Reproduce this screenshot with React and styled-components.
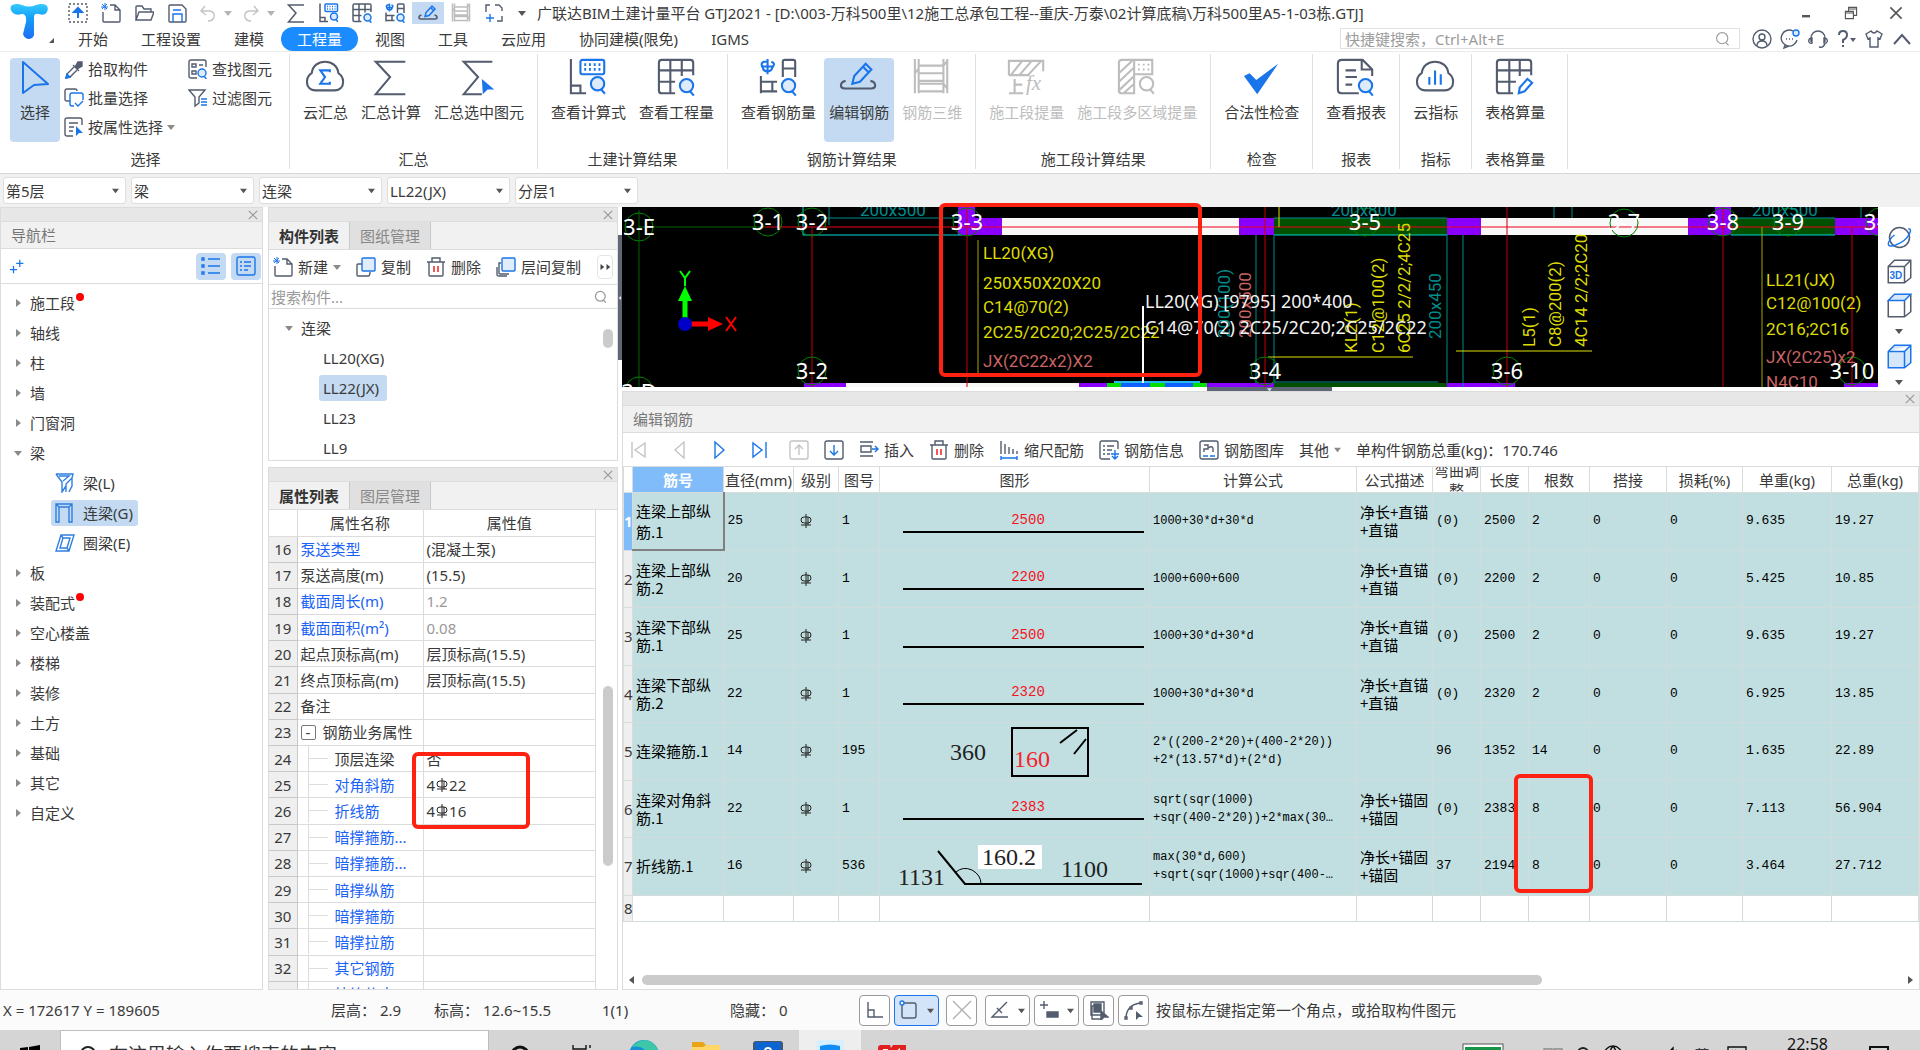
import React from 'react'
import styled, { createGlobalStyle, css } from 'styled-components'

const ink = '#3a3a3a'
const steel = '#535c6e'
const blue = '#1a75ea'
const picked = '#c3daf2'
const line = '#dcdcdc'

const GlobalStyle = createGlobalStyle`
  * { box-sizing: border-box; }
  body {
    margin: 0;
    color: ${ink};
    background: #f0f0f0;
    font: 15px/20px 'Noto Sans', 'Noto Sans CJK SC', sans-serif;
  }
  button, input, select {
    font: inherit;
    color: inherit;
    border: 0;
    padding: 0;
    margin: 0;
    background: none;
  }
  a { color: inherit; text-decoration: none; }
  svg { display: block; flex: none; }
`

/* ---------- icons ---------- */

const Icon = ({ size = 20, box = 20, color = steel, width = 1.4, children }) => (
  <svg width={size} height={size} viewBox={`0 0 ${box} ${box}`} fill="none" stroke={color} strokeWidth={width} aria-hidden="true">
    {children}
  </svg>
)

const Caret = ({ dir = 'down', color = '#8a8a8a', size = 8 }) => (
  <svg width={size} height={size} viewBox="0 0 8 8" fill={color} aria-hidden="true">
    {dir === 'down' && <path d="M0 2H8L4 7Z" />}
    {dir === 'right' && <path d="M2 0L7 4L2 8Z" />}
    {dir === 'left' && <path d="M6 0L1 4L6 8Z" />}
  </svg>
)

const lens = (x, y, r, stroke = blue, fill = '#ddebfb') => (
  <g stroke={stroke}>
    <circle cx={x} cy={y} r={r} fill={fill} />
    <path d={`M${x + r * 0.5} ${y + r * 0.8}L${x + r * 1.1} ${y + r * 1.5}`} />
  </g>
)

const cloud = 'M10 34C4 34 1 30 1 25C1 21 3 18 6 16C7 8 13 4 20 4C27 4 33 8 34 16C37 18 39 21 39 25C39 30 36 34 30 34Z'

const art = {
  cursor: <path d="M8 4L33 26L19 27L8 35Z" stroke={blue} strokeLinejoin="round" />,
  cloudSum: (
    <>
      <path d={cloud} />
      <path d="M25 15V13H15L20 20L15 27H25V25" stroke={blue} />
    </>
  ),
  sigma: <path d="M36 4H5L20 20L5 38H36" />,
  sigmaPick: (
    <>
      <path d="M35 4H5L20 20L5 38H24" />
      <path d="M24 22L37 33L30 33L25 38Z" fill={blue} stroke="none" />
    </>
  ),
  formula: (
    <>
      <path d="M2 1V37H18M2 29H12V37" />
      <g stroke={blue}>
        <rect x="12" y="2" width="25" height="15" rx="2" />
        <path d="M16 7H34M16 12H34" strokeDasharray="2 3" strokeWidth="3" />
      </g>
      {lens(30, 27, 7)}
    </>
  ),
  quantity: (
    <>
      <path d="M19 37H5Q2 37 2 34V5Q2 2 5 2H35Q38 2 38 5V18M2 13H38M2 25H19M14 2V37M26 2V19" />
      {lens(31, 29, 7)}
    </>
  ),
  rebarQty: (
    <>
      <path d="M25 20V4Q25 2 27 2H36Q38 2 38 4V20M25 11H38M2 19V37M2 25H19M2 35H19M14 25V35" />
      <path d="M9 1V17M4 9Q1 6 5 4H9M13 4Q18 6 14 9M4 9Q4 14 9 14Q14 14 14 9M2 9H16" stroke={blue} />
      {lens(31, 29, 7)}
    </>
  ),
  editRebar: (
    <>
      <path d="M7 24Q2 25 2 29Q2 32 6 32H34Q38 32 38 29Q38 25 33 24" />
      <path d="M14 27L16 19L28 6L34 12L22 25ZM25 9L31 15" stroke={blue} />
    </>
  ),
  rebar3d: <path d="M3 1V37M7 1V37M33 1V37M37 1V37M7 8H33L37 3M7 11L3 16M7 16H33M7 24H33M7 27H33L37 32M7 35H33" />,
  segQty: (
    <>
      <path d="M2 18V3H38V14M2 18H24M4 18L16 3M13 18L26 3M22 18L36 3M8 22V37M2 37H17M8 28H16" />
      <text x="20" y="34" fill="#bdbdbd" stroke="none" fontFamily="Liberation Serif, serif" fontStyle="italic" fontSize="22">fx</text>
    </>
  ),
  segMulti: (
    <>
      <path d="M18 2H5Q2 2 2 5V34Q2 37 5 37H18V2H37V17H18M2 16L16 3M2 25L18 10M2 34L18 19M7 37L18 27" />
      <path d="M22 7H34M22 12H34" strokeDasharray="2 3" strokeWidth="2" />
      {lens(31, 27, 7, '#bdbdbd', 'none')}
    </>
  ),
  check: <path d="M2 19L8 16L15 23L38 6L16 38Z" fill={blue} stroke="none" />,
  report: (
    <>
      <path d="M24 37H6Q2 37 2 33V6Q2 2 6 2H28L38 12V19M27 2V12H38M10 13H21M10 20H22M10 28H17" />
      {lens(31, 29, 7)}
    </>
  ),
  cloudStat: (
    <>
      <path d={cloud} />
      <path d="M14 20V28M20 13V28M26 17V28" stroke={blue} />
    </>
  ),
  sheet: (
    <>
      <path d="M19 37H5Q2 37 2 34V5Q2 2 5 2H35Q38 2 38 5V18M2 13H38M2 25H22M15 2V37M26 2V19" />
      <path d="M25 37L26 31L34 22L39 26L31 35Z" stroke={blue} />
    </>
  ),
}

const mini = {
  upload: (
    <>
      <path d="M1 1H19V19H1Z" strokeDasharray="2 2" />
      <path d="M10 15V6M6 9L10 5L14 9Z" stroke={blue} strokeWidth="2" fill={blue} />
    </>
  ),
  newFile: (
    <>
      <path d="M9 2H14L19 7V18Q19 19 18 19H3Q2 19 2 18V9M14 2V7H19" />
      <path d="M0 4H7M4 0V7M1 1L6 6M6 1L1 6" stroke={blue} strokeWidth="1" />
    </>
  ),
  open: <path d="M2 17V4Q2 3 3 3H8L10 6H17V9M2 17L5 9H20L17 17Z" />,
  save: (
    <>
      <path d="M2 18V3Q2 2 3 2H15L19 6V18Q19 19 18 19H3Q2 19 2 18Z" />
      <path d="M6 19V11H15V19M6 7H14" stroke={blue} />
    </>
  ),
  undo: <path d="M7 3L3 8L8 12M3 8H12Q17 9 16 14Q15 18 10 18" />,
  redo: <path d="M13 3L17 8L12 12M17 8H8Q3 9 4 14Q5 18 10 18" />,
  expand: (
    <>
      <path d="M6 2H2V9M11 2H15L18 5V8M18 13V18H13" />
      <path d="M2 15H10M6 11V19" stroke={blue} />
    </>
  ),
  pick: (
    <>
      <path d="M9 6L15 12M11 8L14 3L18 3L18 7L13 10" fill={steel} />
      <path d="M10 8L3 15L2 19L6 18L13 11" />
      <path d="M3 15L2 19L6 18Z" fill={blue} stroke={blue} />
    </>
  ),
  batch: (
    <>
      <path d="M6 13H3Q1 13 1 11V3Q1 1 3 1H11Q13 1 13 3" />
      <path d="M19 12V7Q19 5 17 5H8Q6 5 6 7V16Q6 18 8 18H10M11 15L14 18L19 13" stroke={blue} />
    </>
  ),
  byProp: (
    <>
      <path d="M9 19H3Q1 19 1 17V3Q1 1 3 1H16Q18 1 18 3V8M5 6H14M5 10H10M5 14H9" />
      <path d="M12 9L19 16L15 16L12 19Z" fill={blue} stroke="none" />
    </>
  ),
  find: (
    <>
      <path d="M9 19H3Q1 19 1 17V3Q1 1 3 1H16Q18 1 18 3V8M4 5H8V8H4ZM4 12H8V15H4ZM11 6H15" />
      {lens(14, 14, 4)}
    </>
  ),
  filter: (
    <>
      <path d="M1 2H17L11 9V15L7 18V9Z" />
      <path d="M13 11H19M13 14H19M13 17H19" stroke={blue} />
    </>
  ),
  copy: (
    <>
      <path d="M6 7H2Q1 7 1 8V18Q1 19 2 19H12Q14 19 14 15" />
      <rect x="6" y="1" width="13" height="13" rx="1" fill="#e0edfc" stroke={blue} />
    </>
  ),
  trash: (
    <>
      <path d="M1 5H19M6 5V1H14V5M3 5V18Q3 19 4 19H16Q17 19 17 18V5" />
      <path d="M8 9V15M12 9V15" stroke="#e11" />
    </>
  ),
  layers: (
    <>
      <path d="M5 6H3V16Q3 17 4 17H13M1 10V18Q1 19 3 19H11" />
      <rect x="6" y="1" width="13" height="13" rx="1" fill="#e0edfc" stroke={blue} />
    </>
  ),
  first: <path d="M3 2V18M16 3V17L6 10Z" />,
  prev: <path d="M15 2V18L6 10Z" />,
  next: <path d="M6 2V18L15 10Z" />,
  last: <path d="M17 2V18M4 3V17L13 10Z" />,
  up: <path d="M1 3Q1 1 3 1H17Q19 1 19 3V17Q19 19 17 19H3Q1 19 1 17ZM10 15V5M6 9L10 5L14 9" />,
  down: (
    <>
      <rect x="1" y="1" width="18" height="18" rx="2" />
      <path d="M10 5V15M6 11L10 15L14 11" stroke={blue} />
    </>
  ),
  insert: (
    <>
      <path d="M1 2H14M1 16H14M2 6H12V12H2Z" />
      <path d="M13 9H19M16 6L19 9L16 12" stroke={blue} />
    </>
  ),
  scale: (
    <>
      <path d="M2 1V14M6 4V14M10 7V14M14 9V14M18 11V14" />
      <path d="M2 18H18M2 16V20M18 16V20" stroke={blue} />
    </>
  ),
  info: (
    <>
      <path d="M11 19H3Q1 19 1 17V3Q1 1 3 1H17Q19 1 19 3V9M4 6H6M8 6H15M4 10H6M8 10H13M4 14H6M8 14H11" />
      <path d="M16 10V18M12 14H20M13 16L16 19L19 16" stroke={blue} />
    </>
  ),
  library: (
    <>
      <rect x="1" y="1" width="18" height="18" rx="2" />
      <path d="M5 5H9V9H5V12M9 8Q14 5 14 9V12" />
      <path d="M4 16H9M11 16H16" stroke={blue} />
    </>
  ),
  beam: <path d="M1 1H18L17 5L11 11V19M1 1L7 9V19L11 13M4 3H14L8 8M17 5V13L14 19" />,
  lintel: <path d="M1 19V1H17V19H14V4H4V19ZM1 1L4 4M17 1L14 4" />,
  ring: <path d="M6 2H19L14 18H1ZM8 5H15L12 15H5ZM6 2L8 5M14 18L12 15" />,
  plus: <path d="M12 3V11M8 7H16M5 10V18M1 14H9" stroke={blue} />,
  list: (
    <g stroke={blue}>
      <path d="M7 3H19M7 10H19M7 17H19" />
      <path d="M1 2H3V4H1ZM1 9H3V11H1ZM1 16H3V18H1Z" />
    </g>
  ),
  card: (
    <g stroke={blue}>
      <rect x="1" y="1" width="18" height="18" rx="2" />
      <path d="M4 6H6M8 6H15M4 10H6M8 10H15M4 14H6M8 14H12" />
    </g>
  ),
  search: <path d="M9 2A7 7 0 1 1 9 16A7 7 0 1 1 9 2M14 15L17 18" />,
  close: <path d="M3 3L17 17M17 3L3 17" />,
  user: <path d="M10 1A9 9 0 1 1 10 19A9 9 0 1 1 10 1M10 5A3 3 0 1 1 10 11A3 3 0 1 1 10 5M5 17Q5 12 10 12Q15 12 15 17" />,
  chat: (
    <>
      <path d="M13 2A8 8 0 1 0 17 11M5 16L4 19L9 17M6 10H7M9 10H10M12 10H13" />
      <circle cx="16" cy="4" r="3" stroke={blue} fill="#dcebfc" />
    </>
  ),
  headset: <path d="M3 13V9A7 7 0 0 1 17 9V13M3 9Q0 10 1 13Q2 15 4 14V9ZM17 9Q20 10 19 13Q18 15 16 14V9ZM17 14Q16 19 11 18" />,
  help: (
    <>
      <path d="M3 6Q3 2 7 2Q11 2 11 6Q11 9 7 11V14M7 16V18" strokeWidth="2" />
      <path d="M14 9H20L17 13Z" fill={steel} stroke="none" />
    </>
  ),
  shirt: <path d="M7 2L2 5L4 10L6 9V18H14V9L16 10L18 5L13 2Q10 6 7 2Z" />,
  chevron: <path d="M2 15L10 6L18 15" strokeWidth="2" />,
  minimize: <path d="M5 14H15" strokeWidth="3" />,
  restore: <path d="M3 8H13V17H3ZM7 8V3H17V13H13M3 10H13M7 5H17" />,
  orbit: (
    <>
      <circle cx="10" cy="10" r="8" />
      <path d="M17 3Q20 3 18 7Q15 13 7 16Q1 18 1 15Q2 11 6 8" stroke={blue} />
    </>
  ),
  cube3d: (
    <>
      <path d="M1 6L6 1H19V15L14 19H1ZM1 6H14L19 1M14 6V19" />
      <text x="2" y="16" fill={blue} stroke="none" fontFamily="Liberation Sans, sans-serif" fontWeight="bold" fontSize="8">3D</text>
    </>
  ),
  cubeTop: (
    <>
      <path d="M1 6V19H14L19 15V1M14 6V19" />
      <path d="M1 6L6 1H19L14 6Z" stroke={blue} fill="#d7e7fb" />
    </>
  ),
  cubeSolid: <path d="M1 6L6 1H19V15L14 19H1ZM1 6H14L19 1M14 6V19" stroke={blue} fill="#d7e7fb" />,
  ortho: <path d="M3 2V17H18M3 10H9V17" />,
  rect: (
    <>
      <rect x="3" y="3" width="14" height="15" rx="2" />
      <circle cx="3" cy="3" r="2" stroke={blue} fill="#fff" />
    </>
  ),
  cross: <path d="M1 1L19 19M19 1L1 19" />,
  angle: <path d="M17 2L2 17H18M7 8L12 13" />,
  offset: (
    <>
      <path d="M1 5H9M5 1V9" />
      <path d="M8 12H19V17H8Z" fill={steel} />
    </>
  ),
  board: (
    <>
      <path d="M6 6H3V19H13M2 2H15V15H2Z" />
      <path d="M5 4H12V12H5ZM12 11L19 17H15L12 20Z" fill={steel} />
    </>
  ),
  curve: (
    <>
      <path d="M2 17Q3 5 16 3M1 17H3V19H1ZM16 2H18V4H16ZM6 7H8V9H6Z" />
      <path d="M12 11L19 17H15L12 20Z" fill={steel} stroke="none" />
    </>
  ),
}

const Mini = ({ name, ...rest }) => <Icon {...rest}>{mini[name]}</Icon>

const Rebar = () => (
  <svg width="14" height="14" viewBox="0 0 14 14" fill="none" stroke="#222" aria-label="HRB400">
    <path d="M7 0V14M2 6Q2 3 5 3H9Q12 3 12 6Q12 9 9 9H5Q2 9 2 6ZM9 3V11M2 11H12" />
  </svg>
)

/* ---------- header ---------- */

const Page = styled.div`
  height: 100vh;
  display: flex;
  flex-direction: column;
  overflow: hidden;
`

const Header = styled.header`
  display: flex;
  flex: none;
  height: 52px;
  background: #fff;
  border-bottom: 1px solid #ececec;
`

const Logo = styled.div`
  width: 62px;
  flex: none;
  display: flex;
  align-items: flex-end;
  padding: 0 0 7px 9px;
`

const HeaderRows = styled.div`
  flex: 1;
  min-width: 0;
`

const TitleRow = styled.div`
  display: flex;
  align-items: center;
  height: 26px;
  gap: 1px;
`

const QuickButton = styled.button`
  flex: none;
  height: 22px;
  width: ${p => p.$w || 32}px;
  display: flex;
  align-items: center;
  justify-content: center;
  gap: 6px;
  background: ${p => (p.$active ? picked : 'none')};
`

const Title = styled.h1`
  flex: 1;
  margin: 0 0 0 3px;
  font-size: 15px;
  font-weight: 400;
  white-space: nowrap;
`

const WindowButtons = styled.div`
  display: flex;
  gap: 29px;
  padding-right: 16px;
`

const MenuRow = styled.div`
  display: flex;
  align-items: center;
  height: 25px;
  padding-right: 8px;
`

const Menu = styled.nav`
  display: flex;
  flex: 1;
  gap: 1px;
`

const MenuLink = styled.a`
  padding: 0 16px;
  line-height: 24px;
  border-radius: 12px;
  white-space: nowrap;
  ${p => p.$active && css`
    color: #fff;
    background: #1b8cff;
  `}
`

const CommandSearch = styled.label`
  display: flex;
  align-items: center;
  width: 400px;
  height: 21px;
  padding: 0 8px 0 4px;
  margin-right: 12px;
  border: 1px solid #e0e0e0;
  input {
    flex: 1;
    outline: 0;
    height: 18px;
  }
  input::placeholder { color: #9c9c9c; opacity: 1; }
`

const HelperButtons = styled.div`
  display: flex;
  gap: 8px;
`

const quick = [
  ['upload', '上传'], ['newFile', '新建'], ['open', '打开'], ['save', '保存'],
  ['undo', '撤销', true], ['redo', '恢复', true],
]
const quickTools = ['sigma', 'formula', 'quantity', 'rebarQty', 'editRebar', 'rebar3d']
const menus = ['开始', '工程设置', '建模', '工程量', '视图', '工具', '云应用', '协同建模(限免)', 'IGMS']

const AppHeader = () => (
  <Header>
    <Logo>
      <svg width="50" height="40" viewBox="0 0 50 40">
        <defs>
          <linearGradient id="t" x1="0" y1="0" x2="0" y2="1">
            <stop offset="0" stopColor="#35c9ff" />
            <stop offset="0.4" stopColor="#12a0f7" />
            <stop offset="1" stopColor="#1e6cf5" />
          </linearGradient>
        </defs>
        <path d="M3 1Q8 -1 13 1Q20 4 27 1Q33 -1 37 1Q40 3 38 8Q36 12 30 10Q25 9 25 13V31Q24 35 19 35Q15 34 14 30L17 18Q18 10 13 10Q6 12 3 8Q0 4 3 1Z" fill="url(#t)" />
        <path d="M45 34V39H40Z" fill="#555" />
      </svg>
    </Logo>
    <HeaderRows>
      <TitleRow>
        {quick.map(([name, label, off]) => (
          <QuickButton key={name} aria-label={label} $w={off ? 42 : 32}>
            <Mini name={name} color={off ? '#c4c4c4' : steel} />
            {off && <Caret color="#b4b4b4" />}
          </QuickButton>
        ))}
        {quickTools.map(name => (
          <QuickButton key={name} aria-label={name} $active={name === 'editRebar'}>
            <Icon box={40} width={3} color={name === 'rebar3d' ? '#bdbdbd' : steel}>{art[name]}</Icon>
          </QuickButton>
        ))}
        <QuickButton aria-label="展开"><Mini name="expand" /></QuickButton>
        <QuickButton aria-label="更多命令" $w={22}><Caret color="#555" /></QuickButton>
        <Title>广联达BIM土建计量平台 GTJ2021 - [D:\003-万科500里\12施工总承包工程--重庆-万泰\02计算底稿\万科500里A5-1-03栋.GTJ]</Title>
        <WindowButtons>
          <button aria-label="最小化"><Mini name="minimize" size={16} color="#555" /></button>
          <button aria-label="还原"><Mini name="restore" size={16} color="#555" /></button>
          <button aria-label="关闭"><Mini name="close" size={16} color="#555" width={2} /></button>
        </WindowButtons>
      </TitleRow>
      <MenuRow>
        <Menu>
          {menus.map(m => <MenuLink key={m} href="#" $active={m === '工程量'}>{m}</MenuLink>)}
        </Menu>
        <CommandSearch>
          <input aria-label="快捷键搜索" placeholder="快捷键搜索，Ctrl+Alt+E" />
          <Mini name="search" size={16} color="#9c9c9c" />
        </CommandSearch>
        <HelperButtons>
          {['user', 'chat', 'headset', 'help', 'shirt', 'chevron'].map(n => (
            <button key={n} aria-label={n}><Mini name={n} /></button>
          ))}
        </HelperButtons>
      </MenuRow>
    </HeaderRows>
  </Header>
)

/* ---------- ribbon ---------- */

const RibbonBar = styled.div`
  display: flex;
  flex: none;
  height: 122px;
  padding: 2px 0 4px;
  background: #fff;
  border-bottom: 1px solid #d6d6d6;
`

const Group = styled.section`
  display: flex;
  flex-direction: column;
  justify-content: space-between;
  padding: 4px 8px 0 8px;
  border-right: 1px solid #e0e0e0;
  text-align: center;
  &:first-child { padding-left: 10px; }
  &:last-child { padding-right: 17px; }
`

const GroupBody = styled.div`
  display: flex;
  gap: 3px;
`

const BigButton = styled.button`
  display: flex;
  flex-direction: column;
  align-items: center;
  gap: 4px;
  height: 84px;
  padding: 0 5px;
  border-radius: 4px;
  white-space: nowrap;
  color: ${p => (p.$off ? '#bdbdbd' : ink)};
  background: ${p => (p.$active ? picked : 'none')};
`

const SelectButton = styled(BigButton)`
  width: 50px;
`

const SmallColumn = styled.div`
  display: flex;
  flex-direction: column;
  gap: 9px;
  padding: 1px 9px 0 1px;
`

const SmallButton = styled.button`
  display: flex;
  align-items: center;
  gap: 4px;
  white-space: nowrap;
`

const GroupName = styled.div`
  line-height: 20px;
`

const groups = [
  ['汇总', [['cloudSum', '云汇总'], ['sigma', '汇总计算'], ['sigmaPick', '汇总选中图元']]],
  ['土建计算结果', [['formula', '查看计算式'], ['quantity', '查看工程量']]],
  ['钢筋计算结果', [['rebarQty', '查看钢筋量'], ['editRebar', '编辑钢筋', 'active'], ['rebar3d', '钢筋三维', 'off']]],
  ['施工段计算结果', [['segQty', '施工段提量', 'off'], ['segMulti', '施工段多区域提量', 'off']]],
  ['检查', [['check', '合法性检查']]],
  ['报表', [['report', '查看报表']]],
  ['指标', [['cloudStat', '云指标']]],
  ['表格算量', [['sheet', '表格算量']]],
]

const Ribbon = () => (
  <RibbonBar>
    <Group>
      <GroupBody>
        <SelectButton $active><Icon size={40} box={40} width={2}>{art.cursor}</Icon>选择</SelectButton>
        <SmallColumn>
          <SmallButton><Mini name="pick" />拾取构件</SmallButton>
          <SmallButton><Mini name="batch" />批量选择</SmallButton>
          <SmallButton><Mini name="byProp" />按属性选择 <Caret /></SmallButton>
        </SmallColumn>
        <SmallColumn>
          <SmallButton><Mini name="find" />查找图元</SmallButton>
          <SmallButton><Mini name="filter" />过滤图元</SmallButton>
        </SmallColumn>
      </GroupBody>
      <GroupName>选择</GroupName>
    </Group>
    {groups.map(([name, tools]) => (
      <Group key={name}>
        <GroupBody>
          {tools.map(([icon, label, state]) => (
            <BigButton key={label} $active={state === 'active'} $off={state === 'off'} disabled={state === 'off'}>
              <Icon size={40} box={42} width={2.2} color={state === 'off' ? '#bdbdbd' : steel}>{art[icon]}</Icon>
              {label}
            </BigButton>
          ))}
        </GroupBody>
        <GroupName>{name}</GroupName>
      </Group>
    ))}
  </RibbonBar>
)

const FilterBar = styled.div`
  display: flex;
  flex: none;
  align-items: flex-start;
  gap: 5px;
  height: 33px;
  padding: 3px;
  background: #f1f1f1;
`

const Combo = styled.label`
  display: flex;
  align-items: center;
  width: 123px;
  height: 27px;
  padding: 0 6px 0 2px;
  background: #fff;
  border: 1px solid #dedede;
  border-radius: 3px;
  select {
    flex: 1;
    appearance: none;
    outline: 0;
  }
`

const Filters = () => (
  <FilterBar>
    {['第5层', '梁', '连梁', 'LL22(JX)', '分层1'].map(v => (
      <Combo key={v}>
        <select aria-label={v}><option>{v}</option></select>
        <Caret color="#555" size={7} />
      </Combo>
    ))}
  </FilterBar>
)

/* ---------- panels ---------- */

const Main = styled.main`
  display: flex;
  flex: 1;
  min-height: 0;
  background: #fff;
`

const Panel = styled.section`
  position: relative;
  display: flex;
  flex-direction: column;
  min-height: 0;
  background: #fff;
  border: 1px solid ${line};
  flex: ${p => p.$flex || 'none'};
`

const CloseBar = styled.div`
  display: flex;
  flex: none;
  justify-content: flex-end;
  align-items: center;
  height: 14px;
  padding-right: 3px;
  background: #e7e7e7;
  border-bottom: 1px solid ${line};
`

const CloseStrip = () => (
  <CloseBar><button aria-label="关闭"><Mini name="close" size={12} color="#999" width={2} /></button></CloseBar>
)

const Caption = styled.div`
  flex: none;
  height: 27px;
  padding-left: 10px;
  line-height: 26px;
  color: #777;
  background: #f1f1f1;
  border-bottom: 1px solid ${line};
`

const Tabs = styled.div`
  display: flex;
  flex: none;
  height: 28px;
  background: #f1f1f1;
  border-bottom: 1px solid ${line};
`

const Tab = styled.button`
  width: 81px;
  font-weight: ${p => (p.$active ? 700 : 400)};
  color: ${p => (p.$active ? '#333' : '#888')};
  background: ${p => (p.$active ? '#f1f1f1' : '#e0e0e0')};
  border-right: 1px solid #c4c9ce;
`

const Tools = styled.div`
  display: flex;
  flex: none;
  align-items: center;
  gap: 15px;
  height: 35px;
  padding: 0 4px;
  border-bottom: 1px solid ${line};
`

const Tool = styled.button`
  display: flex;
  align-items: center;
  gap: 5px;
  white-space: nowrap;
`

const NavColumn = styled(Panel)`
  width: 263px;
  margin-right: 5px;
`

const ViewTools = styled(Tools)`
  gap: 5px;
  padding: 0 1px 0 8px;
`

const ViewButton = styled.button`
  display: flex;
  align-items: center;
  justify-content: center;
  width: 30px;
  height: 27px;
  border-radius: 4px;
  background: ${picked};
`

const Spacer = styled.span`
  flex: 1;
`

const Tree = styled.ul`
  list-style: none;
  margin: 0;
  padding: 4px 0 0;
`

const Branch = styled.li`
  display: flex;
  align-items: center;
  gap: 8px;
  height: 30px;
  padding-left: ${p => p.$indent}px;
`

const Dot = styled.i`
  width: 8px;
  height: 8px;
  margin: -12px 0 0 -7px;
  border-radius: 50%;
  background: #f00;
`

const Leaf = styled.button`
  display: flex;
  align-items: center;
  gap: 8px;
  height: 26px;
  padding: 0 ${p => p.$pad}px 0 4px;
  border-radius: 3px;
  background: ${p => (p.$active ? picked : 'none')};
`

const nav = [
  ['施工段', true], ['轴线'], ['柱'], ['墙'], ['门窗洞'], ['梁', false, [['beam', '梁(L)'], ['lintel', '连梁(G)'], ['ring', '圈梁(E)']]],
  ['板'], ['装配式', true], ['空心楼盖'], ['楼梯'], ['装修'], ['土方'], ['基础'], ['其它'], ['自定义'],
]

const Navigator = () => (
  <NavColumn>
    <CloseStrip />
    <Caption>导航栏</Caption>
    <ViewTools>
      <button aria-label="添加"><Mini name="plus" size={18} /></button>
      <Spacer />
      <ViewButton aria-label="列表"><Mini name="list" /></ViewButton>
      <ViewButton aria-label="卡片"><Mini name="card" /></ViewButton>
    </ViewTools>
    <Tree>
      {nav.map(([name, dot, children]) => (
        <React.Fragment key={name}>
          <Branch $indent={13}>
            <Caret dir={children ? 'down' : 'right'} />
            {name}
            {dot && <Dot />}
          </Branch>
          {children && children.map(([icon, label]) => (
            <Branch key={label} $indent={50}>
              <Leaf $pad={5} $active={icon === 'lintel'}><Mini name={icon} color="#2f7fe0" />{label}</Leaf>
            </Branch>
          ))}
        </React.Fragment>
      ))}
    </Tree>
  </NavColumn>
)

const MiddleColumn = styled.div`
  display: flex;
  flex-direction: column;
  flex: none;
  width: 350px;
  gap: 6px;
`

const MoreButton = styled.button`
  display: flex;
  margin-left: auto;
  padding: 8px 1px;
  border: 1px solid #e4e4e4;
  border-radius: 4px;
`

const ListSearch = styled.label`
  display: flex;
  flex: none;
  align-items: center;
  height: 24px;
  padding: 0 9px 0 2px;
  border-bottom: 1px solid ${line};
  input {
    flex: 1;
    outline: 0;
  }
  input::placeholder { color: #999; opacity: 1; }
`

const Scroller = styled.div`
  display: flex;
  flex: 1;
  align-items: flex-start;
  min-height: 0;
  overflow: hidden;
`

const ListTree = styled(Tree)`
  flex: 1;
`

const Thumb = styled.div`
  flex: none;
  width: 10px;
  height: ${p => p.$h}px;
  margin: ${p => p.$top}px 4px 0 7px;
  border-radius: 5px;
  background: #cbcbcb;
`

const ComponentList = () => (
  <Panel>
    <CloseStrip />
    <Tabs><Tab $active>构件列表</Tab><Tab>图纸管理</Tab></Tabs>
    <Tools>
      <Tool><Mini name="newFile" />新建<Caret /></Tool>
      <Tool><Mini name="copy" />复制</Tool>
      <Tool><Mini name="trash" />删除</Tool>
      <Tool><Mini name="layers" />层间复制</Tool>
      <MoreButton aria-label="更多"><Caret dir="right" color="#444" size={6} /><Caret dir="right" color="#444" size={6} /></MoreButton>
    </Tools>
    <ListSearch>
      <input aria-label="搜索构件" placeholder="搜索构件..." />
      <Mini name="search" size={14} color="#999" width={1.8} />
    </ListSearch>
    <Scroller>
      <ListTree>
        <Branch $indent={16}><Caret />连梁</Branch>
        {['LL20(XG)', 'LL22(JX)', 'LL23', 'LL9'].map(n => (
          <Branch key={n} $indent={50}><Leaf $pad={8} $active={n === 'LL22(JX)'}>{n}</Leaf></Branch>
        ))}
      </ListTree>
      <Thumb $h={19} $top={20} />
    </Scroller>
  </Panel>
)

const ListSlot = styled.div`
  flex: none;
  display: grid;
  height: 254px;
`

const PropTable = styled.table`
  flex: 1;
  height: 498px;
  border-collapse: collapse;
  table-layout: fixed;
  white-space: nowrap;
  th, td {
    height: 26px;
    padding: 0 3px;
    border: solid ${line};
    border-width: 0 1px 1px 0;
    font-weight: 400;
    text-align: left;
    overflow: hidden;
  }
  thead th { text-align: center; }
  tbody th {
    padding: 0;
    text-align: center;
    background: #efefef;
    border-color: #c8c8c8;
  }
`

const PropName = styled.span`
  display: flex;
  align-items: center;
  gap: 7px;
  color: ${p => (p.$link ? '#1a63f5' : ink)};
`

const Stub = styled.i`
  width: 20px;
  height: 25px;
  margin-left: 7px;
  border-left: 1px solid #ddd;
  background: linear-gradient(#ddd, #ddd) 0 50% / 100% 1px no-repeat;
`

const MinusBox = styled.button`
  width: 15px;
  height: 15px;
  line-height: 10px;
  border: 1px solid #777;
  border-radius: 2px;
`

const Muted = styled.span`
  color: #999;
`

const Bars = styled.span`
  display: flex;
  align-items: center;
`

const RedFrame = styled.div`
  position: absolute;
  border: 4px solid #ff2213;
  border-radius: 6px;
  pointer-events: none;
`

const PropFrame = styled(RedFrame)`
  left: 143px;
  top: 284px;
  width: 118px;
  height: 77px;
`

const props = [
  ['泵送类型', '(混凝土泵)', 'link'],
  ['泵送高度(m)', '(15.5)'],
  ['截面周长(m)', <Muted>1.2</Muted>, 'link'],
  ['截面面积(m²)', <Muted>0.08</Muted>, 'link'],
  ['起点顶标高(m)', '层顶标高(15.5)'],
  ['终点顶标高(m)', '层顶标高(15.5)'],
  ['备注', ''],
  ['钢筋业务属性', '', 'group'],
  ['顶层连梁', '否', 'sub'],
  ['对角斜筋', <Bars>4<Rebar />22</Bars>, 'sub link'],
  ['折线筋', <Bars>4<Rebar />16</Bars>, 'sub link'],
  ['暗撑箍筋...', '', 'sub link'],
  ['暗撑箍筋...', '', 'sub link'],
  ['暗撑纵筋', '', 'sub link'],
  ['暗撑箍筋', '', 'sub link'],
  ['暗撑拉筋', '', 'sub link'],
  ['其它钢筋', '', 'sub link'],
  ['拉筋信息', '', 'sub link'],
]

const Properties = () => (
  <Panel $flex="1">
    <CloseStrip />
    <Tabs><Tab $active>属性列表</Tab><Tab>图层管理</Tab></Tabs>
    <Scroller>
      <PropTable>
        <colgroup><col width="28" /><col width="126" /><col /></colgroup>
        <thead><tr><th /><th>属性名称</th><th>属性值</th></tr></thead>
        <tbody>
          {props.map(([name, value, kind = ''], i) => (
            <tr key={i}>
              <th>{i < 17 ? i + 16 : ''}</th>
              <td>
                <PropName $link={kind.includes('link')}>
                  {kind === 'group' && <MinusBox aria-label="折叠">-</MinusBox>}
                  {kind.includes('sub') && <Stub />}
                  {name}
                </PropName>
              </td>
              <td>{value}</td>
            </tr>
          ))}
        </tbody>
      </PropTable>
      <Thumb $h={180} $top={176} />
    </Scroller>
    <PropFrame />
  </Panel>
)

/* ---------- drawing area ---------- */

const Workspace = styled.div`
  display: flex;
  flex: 1;
  flex-direction: column;
  min-width: 0;
`

const Viewport = styled.div`
  display: flex;
  flex: none;
  height: 180px;
`

const SideGrip = styled.div`
  display: flex;
  align-items: center;
  width: 4px;
  flex: none;
  margin: 28px 0 27px;
  background: #5d6775;
`

const BottomGrip = styled.div`
  display: flex;
  justify-content: center;
  flex: none;
  width: 125px;
  height: 4px;
  margin: 0 auto;
  background: #5d6775;
`

const Canvas = styled.div`
  position: relative;
  flex: 1;
  min-width: 0;
  height: 180px;
  background: #000;
`

const Drawing = styled.svg`
  width: 100%;
  height: 100%;
  .cad { font: 17px Roboto, sans-serif; fill: #dcdc00; }
  .pink { fill: #c86464; }
  .teal { fill: #008c8c; }
  .axis { font: 22px 'Noto Sans', sans-serif; fill: #fff; text-anchor: middle; }
  .tip { font: 18px 'Noto Sans', sans-serif; fill: #f2f2f2; }
`

const CanvasFrame = styled(RedFrame)`
  left: 317px;
  top: -4px;
  width: 263px;
  height: 174px;
`

const CubeBar = styled.div`
  display: flex;
  flex: none;
  flex-direction: column;
  align-items: center;
  gap: 9px;
  width: 42px;
  padding-top: 18px;
  background: #fff;
`

const axisMarks = [
  [17, 20, '3-E', 28], [146, 15, '3-1', 23], [190, 15, '3-2', 23], [345, 15, '3-3', 23],
  [743, 15, '3-5', 23], [1002, 16, '3-7', 23], [1101, 15, '3-8', 23], [1166, 15, '3-9', 23], [1258, 15, '3-1', 23],
  [17, 184, '3-D', 193], [190, 164, '3-2', 172], [643, 164, '3-4', 172], [885, 164, '3-6', 172], [1230, 164, '3-10', 172],
]

const cadNotes = [
  [361, 52, 'LL20(XG)'], [361, 82, '250X50X20X20'], [361, 106, 'C14@70(2)'], [361, 131, '2C25/2C20;2C25/2C22'],
  [361, 160, 'JX(2C22x2)X2', 'pink'],
  [1144, 79, 'LL21(JX)'], [1144, 102, 'C12@100(2)'], [1144, 128, '2C16;2C16'], [1144, 156, 'JX(2C25)x2', 'pink'], [1144, 181, 'N4C10', 'pink'],
  [238, 9, '200x500', 'teal'], [709, 9, '200x800', 'teal'], [1130, 9, '200x500', 'teal'],
]

const uprightNotes = [
  [608, 131, '200(100)', 'teal'], [629, 131, '200x500', 'pink'],
  [735, 146, 'KL2(1)'], [762, 146, 'C12@100(2)'], [788, 146, '6C25 2/2/2;4C25'], [819, 132, '200x450', 'teal'],
  [913, 140, 'L5(1)'], [939, 140, 'C8@200(2)'], [965, 140, '4C14 2/2;2C20'],
]

const PlanView = () => (
  <Viewport>
    <SideGrip><Caret dir="left" color="#ddd" size={4} /></SideGrip>
    <Canvas>
      <Drawing viewBox="0 0 1256 180" preserveAspectRatio="xMinYMin slice">
        <path d="M380 11H617V28H380ZM859 11H1066V28H859ZM224 176H457V180H224Z" fill="#f8f8f8" />
        <path d="M652 11H825V28H652ZM1109 11H1213V28H1109ZM652 176H825V180H652Z" fill="#005000" />
        <path d="M336 0H353V11H380V28H336ZM617 11H652V28H617ZM825 11H859V28H825ZM1066 11H1093V0H1109V28H1066ZM1213 11H1256V28H1213ZM182 176H224V180H182ZM457 176H652V180H457ZM825 176H893V180H825ZM1222 176H1256V180H1222Z" fill="#8a00ff" />
        <path d="M181 0V28H340M652 28H825M1109 28H1213" stroke="#00d8d8" fill="none" />
        <path d="M199 11H338M207 0V18M634 28V176M652 28V176M652 11H825M652 175H816M825 28V176M841 28V180M932 0V11M950 0V11M1109 11H1213M1239 0V11" stroke="#008c8c" fill="none" />
        <path d="M492 175H578" stroke="#28b8f0" strokeWidth="2" />
        <path d="M485 178H585" stroke="#00e000" strokeWidth="4" />
        <path d="M499 178H528M543 178H571" stroke="#1060ff" strokeWidth="4" />
        <path d="M17 3V180M17 20H143" stroke="#006400" />
        <path d="M143 20H1256" stroke="#f00018" />
        <path d="M190 20V180M345 0V180M643 0V180M885 0V180M1101 0V180M1230 20V180" stroke="#c80000" />
        <path d="M356 33V166M1140 20V180" stroke="#a8a800" />
        <path d="M646 150H791M834 144H970M657 0V20" stroke="#e0e000" />
        {axisMarks.map(([x, y], i) => <ellipse key={i} cx={x} cy={y} rx="14" ry="14" fill="none" stroke="#008200" />)}
        {cadNotes.map(([x, y, s, tone = '']) => <text key={x + s} x={x} y={y} className={`cad ${tone}`}>{s}</text>)}
        {uprightNotes.map(([x, y, s, tone = '']) => (
          <text key={s} transform={`translate(${x} ${y}) rotate(-90)`} className={`cad ${tone}`}>{s}</text>
        ))}
        {axisMarks.map(([x, , s, base], i) => <text key={i} x={x} y={base} className="axis">{s}</text>)}
        <path d="M521 99V176" stroke="#fff" strokeWidth="2" />
        <text x="523" y="101" className="tip">LL20(XG) [9795] 200*400</text>
        <text x="523" y="127" className="tip">C14@70(2) 2C25/2C20;2C25/2C22</text>
        <path d="M63 111V92" stroke="#0f0" strokeWidth="5" />
        <path d="M56 94L63 79L70 94Z" fill="#0f0" />
        <path d="M69 117H87" stroke="#f00" strokeWidth="5" />
        <path d="M86 110L101 117L86 124Z" fill="#f00" />
        <circle cx="63" cy="117" r="7" fill="#0000c8" />
        <path d="M58 64L63 71L68 64M63 71V79" stroke="#0f0" strokeWidth="2" fill="none" />
        <path d="M104 110L114 124M114 110L104 124" stroke="#f00" strokeWidth="2" />
      </Drawing>
      <CanvasFrame />
    </Canvas>
    <CubeBar>
      <button aria-label="动态观察"><Mini name="orbit" size={25} width={1.2} /></button>
      <button aria-label="三维"><Mini name="cube3d" size={25} width={1.2} /></button>
      <button aria-label="俯视"><Mini name="cubeTop" size={25} width={1.2} /></button>
      <Caret color="#555" />
      <button aria-label="实体"><Mini name="cubeSolid" size={25} width={1.2} /></button>
      <Caret color="#555" />
    </CubeBar>
  </Viewport>
)

/* ---------- rebar editor ---------- */

const Editor = styled(Panel)`
  margin-left: 4px;
`

const EditorTools = styled(Tools)`
  padding-left: 6px;
  height: 34px;
`

const StepButtons = styled.div`
  display: flex;
  gap: 20px;
`

const Sheet = styled.table`
  width: 100%;
  height: 455px;
  border-collapse: collapse;
  table-layout: fixed;
  color: #000;
  th {
    height: 25px;
    padding: 0;
    font-weight: 400;
    color: ${ink};
    border: 1px solid #d9dcdc;
    border-top: 0;
    white-space: nowrap;
  }
  td {
    height: 57px;
    padding: 0 3px;
    border: 1px solid #d3dcdc;
    background: #c1dfe1;
    font: 13px/18px 'Liberation Mono', 'Noto Sans CJK SC', monospace;
    overflow: hidden;
  }
  thead th:nth-child(2) {
    color: #fff;
    font-weight: 700;
    background: #80bbfa;
  }
  tbody th {
    background: #efefef;
  }
  tbody tr:first-child th {
    color: #fff;
    font-weight: 700;
    background: #80bbfa;
  }
  tbody tr:last-child td {
    height: 26px;
    background: #fff;
  }
`

const NameCell = styled.td`
  && {
    font: 15px/18px 'Noto Sans CJK SC', sans-serif;
    ${p => p.$editing && css`
      line-height: 21px;
      border-right: 2px solid #808080;
      border-bottom: 2px solid #808080;
    `}
  }
`

const FormulaCell = styled.td`
  && {
    font-size: 12px;
    white-space: pre-line;
  }
`

const GradeCell = styled.td`
  && { padding-left: 5px; }
`

const ClippedHead = styled.div`
  display: flex;
  align-items: center;
  justify-content: center;
  height: 25px;
  line-height: 20px;
  white-space: normal;
  overflow: hidden;
`

const Shape = styled.svg`
  margin: 0 auto;
  text { font-family: 'Liberation Serif', serif; font-size: 24px; fill: #222; }
  text.len { font: 14px 'Liberation Mono', monospace; fill: #f5121d; }
  text.red { fill: #f5222d; }
`

const ShapeCell = styled.td`
  && { padding: 0; }
`

const TrackRow = styled.div`
  display: flex;
  align-items: center;
  gap: 6px;
  margin-top: auto;
  height: 18px;
  padding: 0 5px;
`

const TrackThumb = styled.div`
  flex: none;
  width: 70%;
  height: 10px;
  border-radius: 5px;
  background: #cbcbcb;
`

const CountFrame = styled(RedFrame)`
  right: 326px;
  top: 382px;
  width: 79px;
  height: 119px;
`

const Straight = ({ len }) => (
  <Shape width="268" height="55" viewBox="0 0 268 55">
    <text x="147" y="30" textAnchor="middle" className="len">{len}</text>
    <path d="M22 38H263" stroke="#000" strokeWidth="2" />
  </Shape>
)

const Stirrup = () => (
  <Shape width="268" height="55" viewBox="0 0 268 55">
    <text x="69" y="36">360</text>
    <path d="M131 4H207V52H131ZM196 6L179 19M205 15L193 30" fill="none" stroke="#000" strokeWidth="2" />
    <text x="133" y="43" className="red">160</text>
  </Shape>
)

const Bent = () => (
  <Shape width="268" height="55" viewBox="0 0 268 55">
    <rect x="97" y="6" width="64" height="24" fill="#fff" />
    <path d="M57 12L84 45H261" fill="none" stroke="#000" strokeWidth="2" />
    <path d="M75 33Q82 27 91 31Q100 36 100 45" fill="none" stroke="#000" />
    <text x="17" y="46">1131</text>
    <text x="101" y="26">160.2</text>
    <text x="180" y="38">1100</text>
  </Shape>
)

const heads = ['筋号', '直径(mm)', '级别', '图号', '图形', '计算公式', '公式描述', '弯曲调整', '长度', '根数', '搭接', '损耗(%)', '单重(kg)', '总重(kg)']
const widths = [9, 91, 70, 45, 41, 270, null, 76, 48, 48, 61, 77, 76, 89, 87]

const bars = [
  ['连梁上部纵筋.1', 25, 1, <Straight len="2500" />, '1000+30*d+30*d', '净长+直锚+直锚', '(0)', 2500, 2, '9.635', '19.27'],
  ['连梁上部纵筋.2', 20, 1, <Straight len="2200" />, '1000+600+600', '净长+直锚+直锚', '(0)', 2200, 2, '5.425', '10.85'],
  ['连梁下部纵筋.1', 25, 1, <Straight len="2500" />, '1000+30*d+30*d', '净长+直锚+直锚', '(0)', 2500, 2, '9.635', '19.27'],
  ['连梁下部纵筋.2', 22, 1, <Straight len="2320" />, '1000+30*d+30*d', '净长+直锚+直锚', '(0)', 2320, 2, '6.925', '13.85'],
  ['连梁箍筋.1', 14, 195, <Stirrup />, '2*((200-2*20)+(400-2*20))\n+2*(13.57*d)+(2*d)', '', '96', 1352, 14, '1.635', '22.89'],
  ['连梁对角斜筋.1', 22, 1, <Straight len="2383" />, 'sqrt(sqr(1000)\n+sqr(400-2*20))+2*max(30…', '净长+锚固+锚固', '(0)', 2383, 8, '7.113', '56.904'],
  ['折线筋.1', 16, 536, <Bent />, 'max(30*d,600)\n+sqrt(sqr(1000)+sqr(400-…', '净长+锚固+锚固', '37', 2194, 8, '3.464', '27.712'],
]

const RebarEditor = () => (
  <Editor $flex="1">
    <CloseStrip />
    <Caption>编辑钢筋</Caption>
    <EditorTools>
      <StepButtons>
        <button aria-label="首条"><Mini name="first" color="#c4c4c4" /></button>
        <button aria-label="上一条"><Mini name="prev" color="#c4c4c4" /></button>
        <button aria-label="下一条"><Mini name="next" color={blue} /></button>
        <button aria-label="末条"><Mini name="last" color={blue} /></button>
        <button aria-label="上移"><Mini name="up" color="#c4c4c4" /></button>
      </StepButtons>
      <Tool aria-label="下移"><Mini name="down" /></Tool>
      <Tool><Mini name="insert" />插入</Tool>
      <Tool><Mini name="trash" />删除</Tool>
      <Tool><Mini name="scale" />缩尺配筋</Tool>
      <Tool><Mini name="info" />钢筋信息</Tool>
      <Tool><Mini name="library" />钢筋图库</Tool>
      <Tool>其他 <Caret size={7} /></Tool>
      <span>单构件钢筋总重(kg)：170.746</span>
    </EditorTools>
    <Sheet>
      <colgroup>{widths.map((w, i) => <col key={i} width={w || undefined} />)}</colgroup>
      <thead>
        <tr>
          <th />
          {heads.map(h => <th key={h}>{h === '弯曲调整' ? <ClippedHead>{h}</ClippedHead> : h}</th>)}
        </tr>
      </thead>
      <tbody>
        {bars.map(([name, dia, no, shape, formula, desc, bend, len, count, unit, total], i) => (
          <tr key={name}>
            <th>{i + 1}</th>
            <NameCell $editing={i === 0}>{name}</NameCell>
            <td>{dia}</td>
            <GradeCell><Rebar /></GradeCell>
            <td>{no}</td>
            <ShapeCell>{shape}</ShapeCell>
            <FormulaCell>{formula}</FormulaCell>
            <NameCell>{desc}</NameCell>
            <td>{bend}</td>
            <td>{len}</td>
            <td>{count}</td>
            <td>0</td>
            <td>0</td>
            <td>{unit}</td>
            <td>{total}</td>
          </tr>
        ))}
        <tr>
          <th>8</th>
          {heads.map(h => <td key={h} />)}
        </tr>
      </tbody>
    </Sheet>
    <TrackRow>
      <Caret dir="left" color="#555" />
      <TrackThumb />
      <Spacer />
      <Caret dir="right" color="#555" />
    </TrackRow>
    <CountFrame />
  </Editor>
)

/* ---------- status bar and taskbar ---------- */

const StatusBar = styled.footer`
  display: flex;
  flex: none;
  align-items: center;
  height: 40px;
  padding-left: 3px;
  background: #fbfbfb;
  white-space: nowrap;
`

const Stat = styled.span`
  flex: none;
  width: ${p => p.$w}px;
`

const SnapButtons = styled.div`
  display: flex;
  gap: 4px;
  margin-right: 7px;
`

const Snap = styled.button`
  display: flex;
  align-items: center;
  justify-content: center;
  gap: 8px;
  width: ${p => (p.$wide ? 45 : 31)}px;
  height: 31px;
  margin-right: ${p => p.$gap || 0}px;
  border: 1px solid ${p => (p.$active ? blue : '#9a9a9a')};
  border-radius: 4px;
  background: ${p => (p.$active ? '#d3e3f8' : '#fff')};
`

const Status = () => (
  <StatusBar>
    <Stat $w={328}>X = 172617 Y = 189605</Stat>
    <Stat $w={103}>层高： 2.9</Stat>
    <Stat $w={168}>标高： 12.6~15.5</Stat>
    <Stat $w={128}>1(1)</Stat>
    <Stat $w={129}>隐藏： 0</Stat>
    <SnapButtons>
      <Snap aria-label="正交"><Mini name="ortho" /></Snap>
      <Snap aria-label="矩形" $wide $active $gap={3}><Mini name="rect" /><Caret color="#555" size={7} /></Snap>
      <Snap aria-label="交点" $gap={4}><Mini name="cross" color="#b0b0b0" /></Snap>
      <Snap aria-label="角度" $wide><Mini name="angle" /><Caret color="#555" size={7} /></Snap>
      <Snap aria-label="偏移" $wide><Mini name="offset" /><Caret color="#555" size={7} /></Snap>
      <Snap aria-label="图层"><Mini name="board" /></Snap>
      <Snap aria-label="弧线"><Mini name="curve" /></Snap>
    </SnapButtons>
    <span>按鼠标左键指定第一个角点，或拾取构件图元</span>
  </StatusBar>
)

const TaskbarClip = styled.div`
  flex: none;
  height: 20px;
  overflow: hidden;
  background: #d5d5d5;
`

const Taskbar = styled.div`
  display: flex;
  height: 50px;
`

const TaskItem = styled.button`
  display: flex;
  align-items: center;
  justify-content: center;
  width: ${p => p.$w || 62}px;
  background: ${p => (p.$active ? '#eee' : 'none')};
`

const TaskSearch = styled.label`
  display: flex;
  align-items: center;
  gap: 10px;
  width: 429px;
  padding-left: 18px;
  background: #fff;
  border: 1px solid #bdbdbd;
  font-size: 19px;
  input {
    flex: 1;
    outline: 0;
  }
  input::placeholder { color: #333; opacity: 1; }
`

const Clock = styled.time`
  width: 99px;
  padding-top: 4px;
  font-size: 16px;
  text-align: center;
  color: #111;
`

const Desktop = () => (
  <TaskbarClip>
    <Taskbar>
      <TaskItem $w={60} aria-label="开始">
        <Icon color="none"><path d="M0 3L8 2V9H0ZM9 2L20 0V9H9ZM0 10H8V17L0 16ZM9 10H20V19L9 17Z" fill="#000" /></Icon>
      </TaskItem>
      <TaskSearch>
        <Mini name="search" color="#222" width={2} />
        <input aria-label="搜索" placeholder="在这里输入你要搜索的内容" />
      </TaskSearch>
      <TaskItem aria-label="Cortana"><Icon color="#111" width={3}><circle cx="10" cy="10" r="8" /></Icon></TaskItem>
      <TaskItem aria-label="任务视图"><Icon color="#111"><path d="M1 0V4H14V0M1 7H14V16H1ZM18 0V3M18 6V18" /></Icon></TaskItem>
      <TaskItem aria-label="Edge">
        <svg width="30" height="30" viewBox="0 0 30 30">
          <circle cx="15" cy="15" r="15" fill="#1590d8" />
          <path d="M3 7Q8 0 17 0Q27 2 30 13Q22 17 18 12Q12 5 3 7Z" fill="#3cc8a8" />
        </svg>
      </TaskItem>
      <TaskItem aria-label="文件">
        <svg width="28" height="26" viewBox="0 0 28 26">
          <path d="M0 0H11L14 3H28V26H0Z" fill="#e8a317" />
          <path d="M0 5H11L14 3H28V26H0Z" fill="#ffd668" />
        </svg>
      </TaskItem>
      <TaskItem aria-label="安全">
        <svg width="30" height="28" viewBox="0 0 30 28">
          <rect width="30" height="28" rx="3" fill="#4a5568" />
          <rect x="2" y="1" width="26" height="26" fill="#0b64d0" />
          <circle cx="15" cy="10" r="3" fill="none" stroke="#fff" strokeWidth="2" />
        </svg>
      </TaskItem>
      <TaskItem aria-label="GTJ" $active>
        <svg width="28" height="30" viewBox="0 0 28 30">
          <rect width="28" height="30" rx="4" fill="#d8efff" />
          <path d="M4 6Q14 3 24 6V11H17V25H11V11H4Z" fill="#128cf5" />
        </svg>
      </TaskItem>
      <TaskItem aria-label="WPS">
        <svg width="28" height="20" viewBox="0 0 28 20">
          <path d="M0 3Q0 0 3 0H12L13 3L15 0H28V20H0Z" fill="#e01f1f" />
          <path d="M5 4H10V8H5ZM16 8L22 3V9Z" fill="#fff" />
        </svg>
      </TaskItem>
      <Spacer />
      <TaskItem $w={43} aria-label="电源">
        <svg width="43" height="24" viewBox="0 0 43 24">
          <rect x="1" y="1" width="40" height="22" fill="#fff" stroke="#555" />
          <rect x="3" y="4" width="36" height="18" fill="#149447" />
        </svg>
      </TaskItem>
      <TaskItem $w={33} aria-hidden="true" />
      <TaskItem $w={30} aria-label="词典"><Icon color="#888"><path d="M1 4H9V18H1ZM11 4H19V18H11Z" fill="#fff" /></Icon></TaskItem>
      <TaskItem $w={30} aria-label="联系人"><Icon color="#222" width={2}><circle cx="10" cy="8" r="5" /></Icon></TaskItem>
      <TaskItem $w={30} aria-label="网络"><Icon color="#111"><path d="M10 1A9 9 0 1 1 10 19A9 9 0 1 1 10 1M10 1Q3 10 10 19M10 1Q17 10 10 19M1 8H19" /></Icon></TaskItem>
      <TaskItem $w={30} aria-hidden="true" />
      <TaskItem $w={30} aria-label="音量"><Icon color="#111"><path d="M2 8H5L10 3V17L5 12H2ZM13 5Q17 10 13 15" /></Icon></TaskItem>
      <TaskItem $w={28}>英</TaskItem>
      <TaskItem $w={42} aria-label="输入法"><Icon color="#111"><path d="M1 2H19V18H1ZM5 5L9 10M9 5L5 10M12 5V12M15 5V12" /></Icon></TaskItem>
      <Clock>22:58</Clock>
      <TaskItem $w={43} aria-label="通知"><Icon color="#111" width={2}><path d="M1 2H19V15H14V19L10 15H1Z" /></Icon></TaskItem>
      <TaskItem $w={20} aria-label="显示桌面" />
    </Taskbar>
  </TaskbarClip>
)

const App = () => (
  <Page>
    <GlobalStyle />
    <AppHeader />
    <Ribbon />
    <Filters />
    <Main>
      <Navigator />
      <MiddleColumn>
        <ListSlot><ComponentList /></ListSlot>
        <Properties />
      </MiddleColumn>
      <Workspace>
        <PlanView />
        <BottomGrip><Caret color="#ddd" size={5} /></BottomGrip>
        <RebarEditor />
      </Workspace>
    </Main>
    <Status />
    <Desktop />
  </Page>
)

export default App
